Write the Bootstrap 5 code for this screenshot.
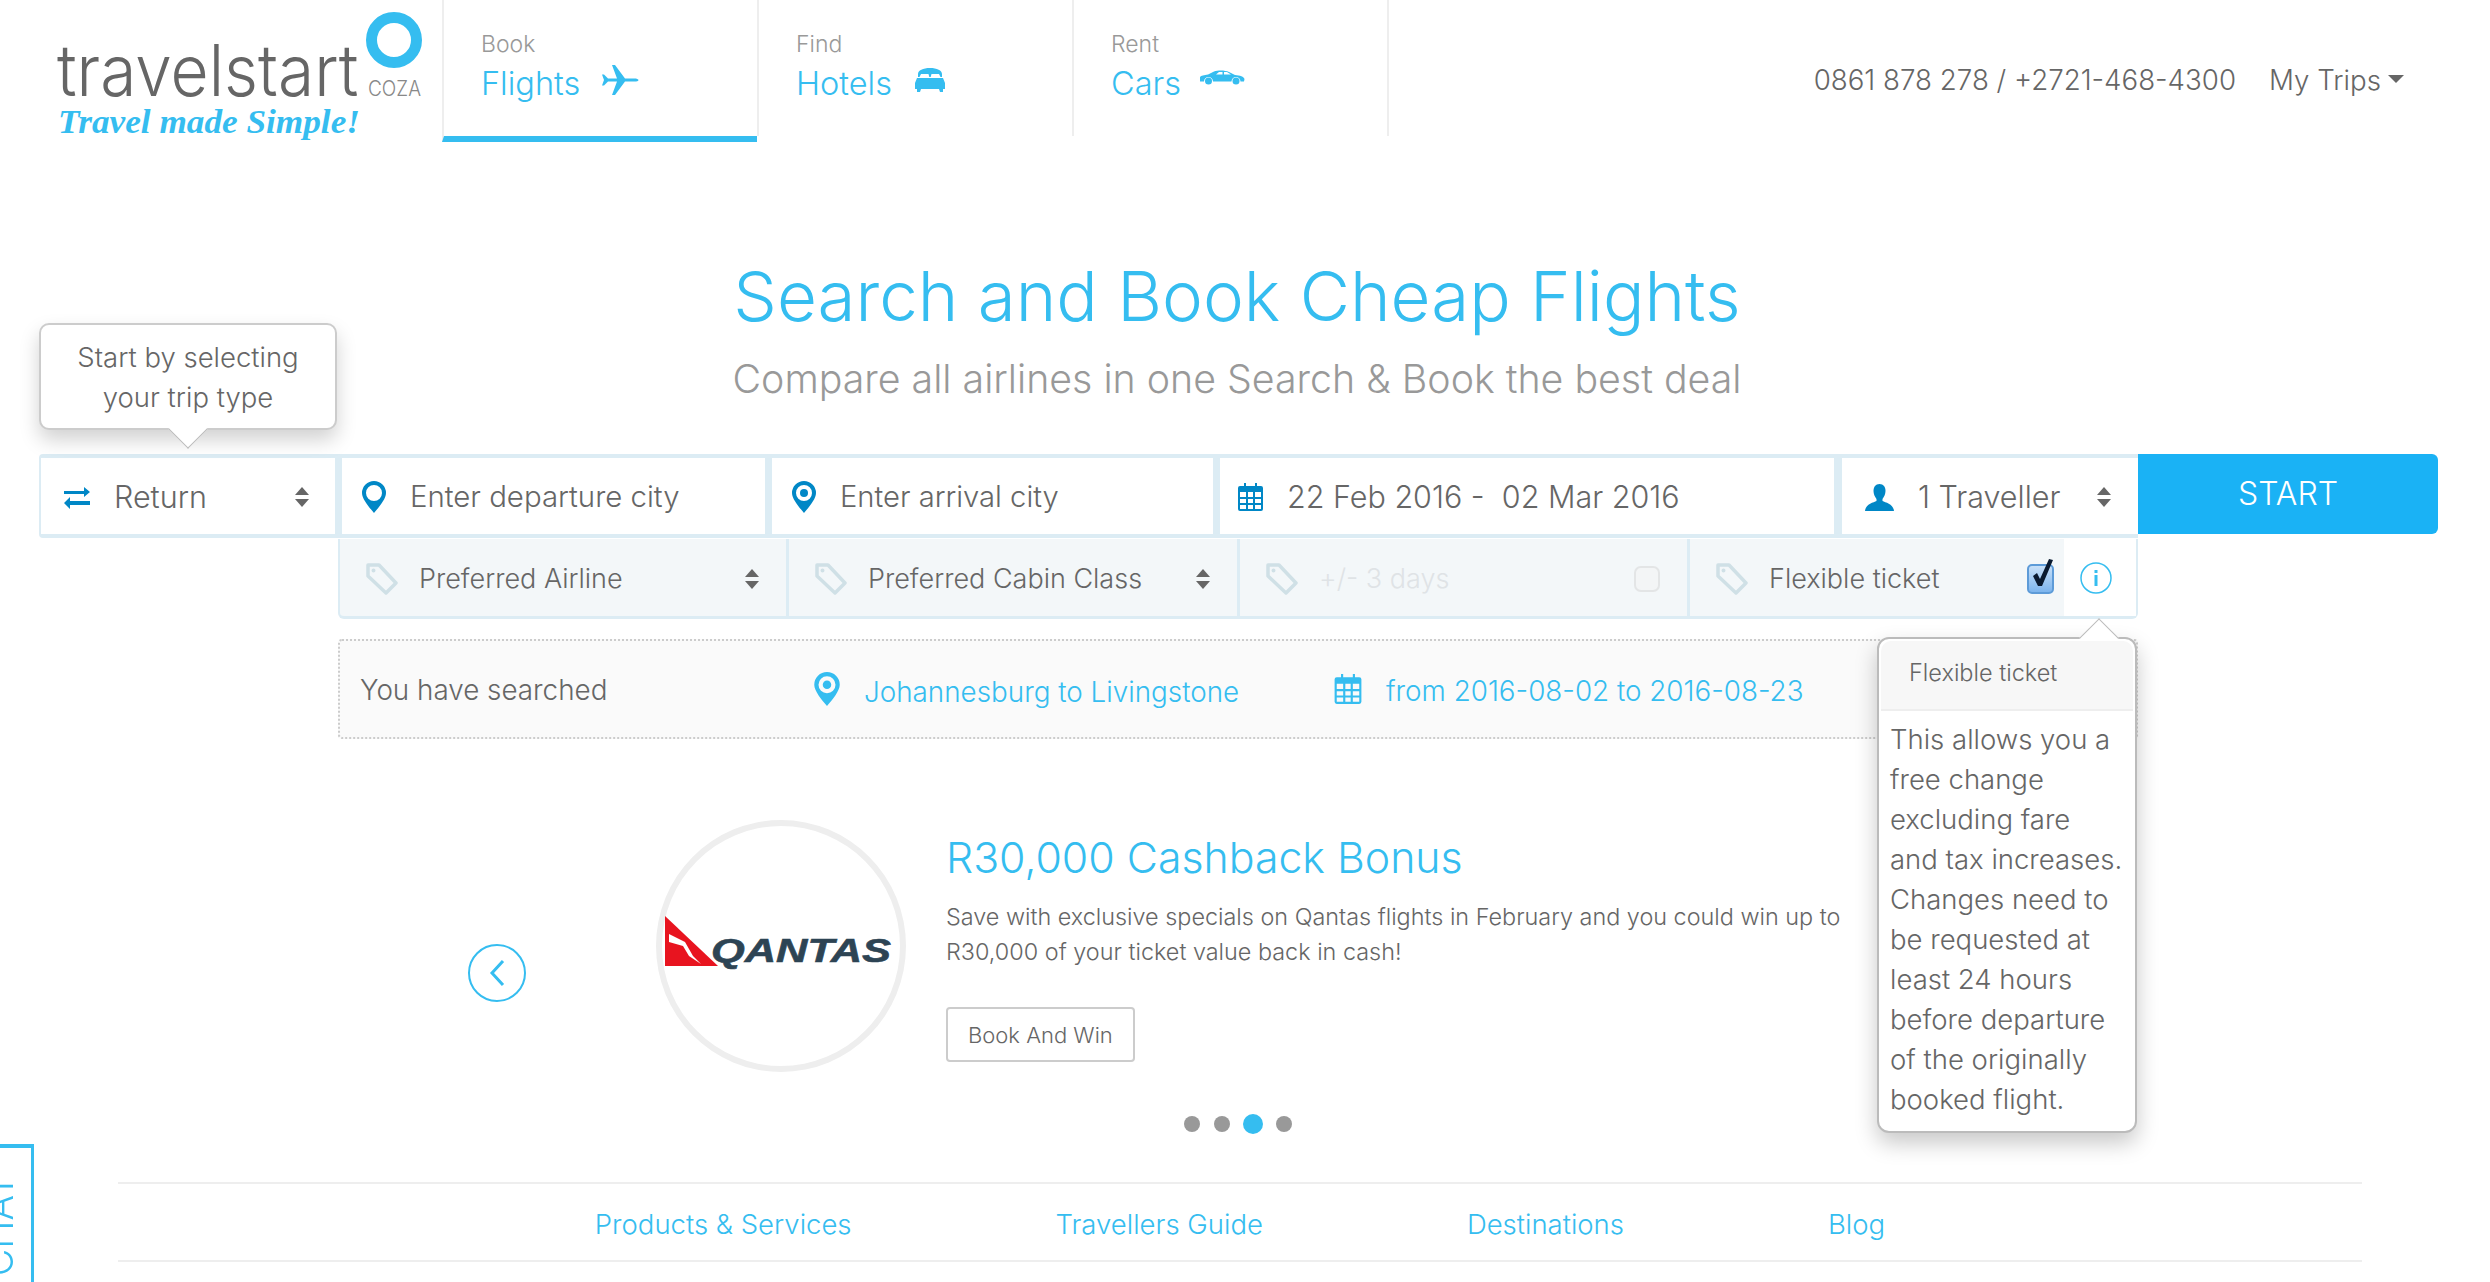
<!DOCTYPE html>
<html lang="en">
<head>
    <meta charset="UTF-8" />
    <meta name="viewport" content="width=device-width, initial-scale=1" />
    <title>Travelstart - Search and Book Cheap Flights</title>
    <link href="https://cdn.jsdelivr.net/npm/bootstrap@5.3.0/dist/css/bootstrap.min.css" rel="stylesheet" />
    <style>
        body {
            font-family: Inter, "Liberation Sans", sans-serif;
            font-weight: 300;
            font-size: 27.5px;
            line-height: 40px;
            color: #666;
            background: #fff;
            height: 1282px;
            overflow: hidden;
        }
        a { text-decoration: none; color: inherit; }

        /* top bar */
        .topbar { height: 142px; }
        .logo-box { width: 442px; flex: none; }
        .logo-word { font-family: Inter, sans-serif; font-weight: 300; font-size: 72px; fill: #666; }
        .logo-coza { font-family: Inter, sans-serif; font-weight: 300; font-size: 21px; fill: #888; }
        .logo-tag { font-family: "Liberation Serif", serif; font-style: italic; font-weight: 700; font-size: 33px; fill: #35bdf0; }
        .tab-item {
            width: 315px;
            height: 136px;
            padding: 26px 0 0 37px;
            border-left: 2px solid #eee;
            flex: none;
        }
        .tab-item.active { border-bottom: 6px solid #35bdf0; height: 142px; }
        .tab-end { border-left: 2px solid #eee; height: 136px; }
        .tab-over { font-size: 23px; line-height: 36px; color: #999; display: block; }
        .tab-name { font-size: 32.5px; line-height: 44px; color: #35bdf0; }
        .ico-plane { margin-left: 13px; vertical-align: 0; }
        .ico-bed { margin-left: 15px; vertical-align: 3px; }
        .ico-car { margin-left: 10px; vertical-align: 10px; }
        .top-right { margin-left: auto; padding: 58px 86px 0 0; line-height: 44px; font-size: 27.7px; }
        .top-right a { margin-left: 33px; }

        /* hero */
        .hero-wrap { padding-right: 16px; }
        .hero-title { font-size: 69px; line-height: 80px; color: #35bdf0; font-weight: 300; margin: 114px 0 0; }
        .hero-sub { font-size: 39.3px; line-height: 50px; color: #999; margin: 18px 0 0; }

        /* search */
        .search-wrap { position: relative; margin: 50px 52px 0 39px; }
        .field-row { height: 84px; }
        .field-main {
            height: 84px;
            background: #fff;
            border-top: 4px solid #dcecf4;
            border-bottom: 4px solid #dcecf4;
            border-right: 7px solid #dcecf4;
            flex: none;
            padding-top: 2px;
            font-size: 30.5px;
        }
        .f-return { width: 303px; border-left: 2px solid #dcecf4; border-radius: 4px 0 0 4px; padding: 2px 26px 0 23px; }
        .f-depart { width: 430px; padding-left: 20px; font-size: 29.4px; }
        .f-arrive { width: 448px; padding-left: 20px; font-size: 29.2px; }
        .f-date { width: 622px; padding-left: 18px; border-right-width: 8px; }
        .f-travel { width: 296px; border-right: 0; padding: 2px 27px 0 23px; }
        .start-btn {
            width: 300px;
            height: 80px;
            background: #1ab2f5;
            border: 0;
            border-radius: 0 6px 6px 0;
            color: #fff;
            font-size: 32px;
            font-weight: 300;
        }
        .extra-row {
            width: 1800px;
            height: 80px;
            margin: 1px 0 0 299px;
            background: #f3f7f9;
            border: 2px solid #dcecf4;
            border-width: 0 2px 3px 2px;
            border-radius: 0 0 6px 6px;
            font-size: 27px;
        }
        .extra-cell { height: 77px; padding: 2px 27px 0 26px; border-right: 3px solid #dcecf4; flex: none; }
        .tag-label { margin-left: 21px; }
        .c-airline { width: 449px; }
        .c-cabin { width: 451px; }
        .c-days { width: 450px; }
        .c-flex { width: 374px; border-right: 0; padding-right: 10px; }
        .c-info { width: 72px; background: #fff; padding: 0 0 0 16px; border-right: 0; }
        .muted-label { color: #dfe3e6; }
        .tick-box { width: 26px; height: 26px; margin: 0; border: 2px solid #d5d5d5; border-radius: 5px; background: #f4f4f4; }
        .tick-on { position: relative; width: 27px; height: 30px; border-radius: 5px; border: 2px solid #5d9bd8;
            background: linear-gradient(#c8e0f8, #7db5ee); display: block; }
        .tick-on svg { position: absolute; left: 1px; top: -8px; }
        .history-row {
            width: 1800px;
            height: 100px;
            margin: 20px 0 0 299px;
            background: #fafafa;
            border: 2px dotted #ccc;
            border-radius: 4px;
            padding-left: 20px;
            color: #35bdf0;
            font-size: 27.8px;
        }
        .history-lead { width: 454px; color: #666; flex: none; padding-top: 2px; }
        .history-place { width: 520px; flex: none; }
        .history-place a { padding-top: 6px; }

        /* tooltip + popover sit over the form */
        .hint-bubble {
            position: absolute;
            left: 0;
            top: -131px;
            width: 298px;
            height: 107px;
            padding: 12px 0;
            text-align: center;
            background: #fff;
            border: 2px solid #ccc;
            border-radius: 10px;
            box-shadow: 0 10px 20px rgba(0,0,0,.18);
        }
        .hint-bubble::after, .info-pop::before {
            content: "";
            position: absolute;
            width: 28px;
            height: 28px;
            background: #fff;
            border: 1px solid #bbb;
            border-width: 0 1px 1px 0;
            transform: rotate(45deg);
        }
        .hint-bubble::after { left: 133px; bottom: -15px; }
        .info-pop {
            position: absolute;
            left: 1838px;
            top: 183px;
            width: 260px;
            height: 496px;
            background: #fff;
            border: 2px solid #bbb;
            border-radius: 12px;
            box-shadow: 0 10px 22px rgba(0,0,0,.22);
        }
        .info-pop::before { left: 206px; top: -15px; transform: rotate(225deg); }
        .pop-head {
            height: 70px;
            margin: 2px 2px 0;
            padding-left: 28px;
            font-size: 23.5px;
            line-height: 64px;
            background: #f7f7f7;
            border-bottom: 2px solid #eee;
            border-radius: 10px 10px 0 0;
            position: relative;
        }
        .pop-text { padding: 8px 0 0 11px; white-space: pre-line; }

        /* promo */
        .promo { margin: 81px 0 0 468px; height: 252px; }
        .arrow-btn { width: 58px; height: 58px; border: 2px solid #35bdf0; border-radius: 50%; flex: none; margin-top: 124px; }
        .logo-round {
            width: 250px;
            height: 252px;
            margin-left: 130px;
            border: 6px solid #eee;
            border-radius: 50%;
            flex: none;
            padding-top: 90px;
            padding-left: 3px;
        }
        .qantas-word { font-family: "Liberation Sans", sans-serif; font-weight: 700; font-style: italic; font-size: 34px; fill: #2d4454; stroke: #2d4454; stroke-width: .6px; }
        .promo-body { margin-left: 40px; }
        .promo-title { font-size: 42.8px; line-height: 60px; color: #35bdf0; font-weight: 300; margin: 8px 0 0; }
        .promo-text { font-size: 23.4px; line-height: 35px; margin: 11px 0 0; width: 925px; }
        .promo-btn { margin-top: 38px; height: 55px; padding: 0 20px; font-size: 22px; font-weight: 300; color: #666; border: 2px solid #ccc; border-radius: 4px; background: #fff; }
        .dot-row { margin: 42px 0 0 1184px; height: 20px; gap: 14px; }
        .pager-dot { width: 16px; height: 16px; border-radius: 50%; background: #999; }
        .pager-dot.on { width: 20px; height: 20px; background: #35bdf0; margin: 0 -1px 0 -1px; }

        /* footer links */
        .foot-links {
            margin: 48px 128px 0 118px;
            height: 80px;
            gap: 204px;
            padding-top: 3px;
            border-top: 2px solid #eee;
            border-bottom: 2px solid #eee;
            color: #35bdf0;
        }

        /* chat tab */
        .chat-tab {
            width: 34px;
            height: 138px;
            left: 0;
            bottom: 0;
            border: 3px solid #35bdf0;
            border-left: 0;
            border-bottom: 0;
            border-top-width: 4px;
            overflow: hidden;
        }
        .chat-label {
            position: absolute;
            right: 20px;
            top: 26px;
            writing-mode: vertical-rl;
            transform: rotate(180deg);
            color: #35bdf0;
            font-size: 38px;
            line-height: 24px;
            white-space: nowrap;
        }
    </style>
</head>
<body>

<!-- Top bar -->
<header class="topbar d-flex">
    <a class="logo-box" href="#">
        <svg width="442" height="142" viewBox="0 0 442 142">
            <text class="logo-word" transform="translate(57 96) scale(.9 1)" textLength="335" lengthAdjust="spacingAndGlyphs">travelstart</text>
            <circle cx="394" cy="40" r="22.5" fill="none" stroke="#35bdf0" stroke-width="11" />
            <text class="logo-coza" x="368" y="96" textLength="53" lengthAdjust="spacingAndGlyphs">COZA</text>
            <text class="logo-tag" x="58" y="133" textLength="302" lengthAdjust="spacingAndGlyphs">Travel made Simple!</text>
        </svg>
    </a>
    <nav class="d-flex">
        <a class="tab-item active" href="#">
            <span class="tab-over">Book</span>
            <span class="tab-name">Flights</span>
            <svg class="ico-plane" width="38" height="30" viewBox="0 0 38 30" fill="#35bdf0"><path d="M37.5 15c0-1-2-1.6-4-1.6H24L14 0h-3l5 13.4H7L3 9.5H1l2 5.5-2 5.5h2l4-3.9h9L11 30h3l10-13.4h9.500c2 0 4-.6 4-1.600z" /></svg>
        </a>
        <a class="tab-item" href="#">
            <span class="tab-over">Find</span>
            <span class="tab-name">Hotels</span>
            <svg class="ico-bed" width="30" height="24" viewBox="0 0 30 24" fill="#35bdf0"><path d="M3 9V6C3 2.500 8 0 15 0s12 2.500 12 6v3h-1.500L24 6h-7.500l-.8 3h-1.400l-.8-3H6L4.500 9z" /><path d="M2 10h26l2 5v6h-2v3h-3l-1-3H6l-1 3H2v-3H0v-6z" /></svg>
        </a>
        <a class="tab-item" href="#">
            <span class="tab-over">Rent</span>
            <span class="tab-name">Cars</span>
            <svg class="ico-car" width="46" height="15" viewBox="0 0 46 15" fill="#35bdf0"><path d="M1 7c1-1.500 4-2 8-2.500L15 1.500C19 0 26 0 30 2l6 3c5 .5 9 1.500 9.500 4l-.5 2.500h-3.500a4.500 4.500 0 0 0-9 0H14a4.500 4.500 0 0 0-9 0H1z" /><circle cx="9.500" cy="11" r="3.500" /><circle cx="37" cy="11" r="3.500" /><path fill="#fff" d="M17 4.500l3-2.500h3.500v2.500zM25 2h3l4 2.500h-7z" /></svg>
        </a>
        <div class="tab-end"></div>
    </nav>
    <div class="top-right d-flex">
        <span>0861 878 278 / +2721-468-4300</span>
        <a class="dropdown-toggle" href="#">My Trips</a>
    </div>
</header>

<!-- Heading -->
<section class="hero-wrap text-center">
    <h1 class="hero-title">Search and Book Cheap Flights</h1>
    <p class="hero-sub">Compare all airlines in one Search &amp; Book the best deal</p>
</section>

<!-- Search form -->
<section class="search-wrap">
    <div class="hint-bubble">Start by selecting<br />your trip type</div>

    <div class="field-row d-flex">
        <div class="field-main f-return d-flex align-items-center">
            <svg width="26" height="23" viewBox="0 0 26 23" fill="#0087c6"><path d="M0 5h20V1l6 5-6 5V8H0zM26 15H6v-4l-6 6 6 6v-4h20z" /></svg>
            <span class="ms-4 flex-grow-1 return-label">Return</span>
            <svg width="14" height="20" viewBox="0 0 14 20" fill="#666"><path d="M7 0l7 8H0zM7 20L0 12h14z" /></svg>
        </div>
        <div class="field-main f-depart d-flex align-items-center">
            <svg width="24" height="32" viewBox="0 0 24 32"><path fill="#0087c6" fill-rule="evenodd" d="M12 0a12 12 0 0 1 12 12c0 6-7 14-12 20C7 26 0 18 0 12A12 12 0 0 1 12 0zm0 4a8 8 0 1 0 0 16 8 8 0 0 0 0-16z" /></svg>
            <span class="ms-4">Enter departure city</span>
        </div>
        <div class="field-main f-arrive d-flex align-items-center">
            <svg width="24" height="32" viewBox="0 0 24 32"><path fill="#0087c6" fill-rule="evenodd" d="M12 0a12 12 0 0 1 12 12c0 6-7 14-12 20C7 26 0 18 0 12A12 12 0 0 1 12 0zm0 4a8 8 0 1 0 0 16 8 8 0 0 0 0-16z" /><circle cx="12" cy="12" r="4" fill="#0087c6" /></svg>
            <span class="ms-4">Enter arrival city</span>
        </div>
        <div class="field-main f-date d-flex align-items-center">
            <svg width="25" height="28" viewBox="0 0 25 28" fill="#0087c6"><path fill-rule="evenodd" d="M2 3h4V0h2v3h9V0h2v3h4a2 2 0 0 1 2 2v21a2 2 0 0 1-2 2H2a2 2 0 0 1-2-2V5a2 2 0 0 1 2-2zm0 6v5h6V9zm8 0v5h5V9zm7 0v5h6V9zM2 16v4h6v-4zm8 0v4h5v-4zm7 0v4h6v-4zM2 22v4h6v-4zm8 0v4h5v-4zm7 0v4h6v-4z" /></svg>
            <span class="ms-4">22 Feb 2016 -&nbsp; 02 Mar 2016</span>
        </div>
        <div class="field-main f-travel d-flex align-items-center">
            <svg width="29" height="27" viewBox="0 0 29 27" fill="#0087c6"><path d="M14.500 0c4 0 6 3 6 7 0 3-1.500 6-3 8v2c3 1.500 11 3 11.500 10H0c.5-7 8.500-8.500 11.500-10v-2c-1.500-2-3-5-3-8 0-4 2-7 6-7z" /></svg>
            <span class="ms-4 flex-grow-1">1 Traveller</span>
            <svg width="14" height="20" viewBox="0 0 14 20" fill="#666"><path d="M7 0l7 8H0zM7 20L0 12h14z" /></svg>
        </div>
        <button class="start-btn" type="button">START</button>
    </div>

    <div class="extra-row d-flex">
        <div class="extra-cell c-airline d-flex align-items-center">
            <svg width="32" height="32" viewBox="0 0 32 32" fill="none" stroke="#cfe0e6" stroke-width="3.500" stroke-linejoin="round"><path d="M2 2h11l17 18-10 10L2 13z" /><circle cx="7.500" cy="7.500" r="1" fill="#cfe0e6" stroke-width="2" /></svg>
            <span class="flex-grow-1 tag-label">Preferred Airline</span>
            <svg width="14" height="20" viewBox="0 0 14 20" fill="#666"><path d="M7 0l7 8H0zM7 20L0 12h14z" /></svg>
        </div>
        <div class="extra-cell c-cabin d-flex align-items-center">
            <svg width="32" height="32" viewBox="0 0 32 32" fill="none" stroke="#cfe0e6" stroke-width="3.500" stroke-linejoin="round"><path d="M2 2h11l17 18-10 10L2 13z" /><circle cx="7.500" cy="7.500" r="1" fill="#cfe0e6" stroke-width="2" /></svg>
            <span class="flex-grow-1 tag-label">Preferred Cabin Class</span>
            <svg width="14" height="20" viewBox="0 0 14 20" fill="#666"><path d="M7 0l7 8H0zM7 20L0 12h14z" /></svg>
        </div>
        <div class="extra-cell c-days d-flex align-items-center">
            <svg width="32" height="32" viewBox="0 0 32 32" fill="none" stroke="#cfe0e6" stroke-width="3.500" stroke-linejoin="round"><path d="M2 2h11l17 18-10 10L2 13z" /><circle cx="7.500" cy="7.500" r="1" fill="#cfe0e6" stroke-width="2" /></svg>
            <span class="flex-grow-1 tag-label muted-label">+/- 3 days</span>
            <input class="tick-box form-check-input" type="checkbox" disabled />
        </div>
        <div class="extra-cell c-flex d-flex align-items-center">
            <svg width="32" height="32" viewBox="0 0 32 32" fill="none" stroke="#cfe0e6" stroke-width="3.500" stroke-linejoin="round"><path d="M2 2h11l17 18-10 10L2 13z" /><circle cx="7.500" cy="7.500" r="1" fill="#cfe0e6" stroke-width="2" /></svg>
            <span class="flex-grow-1 tag-label">Flexible ticket</span>
            <span class="tick-on"><svg width="24" height="32" viewBox="0 0 24 32"><path d="M3 18l4-3 3 6L19 1l4 1-11 26H8z" fill="#0a1a30" /></svg></span>
        </div>
        <div class="extra-cell c-info d-flex align-items-center">
            <svg width="32" height="32" viewBox="0 0 32 32"><circle cx="16" cy="16" r="15" fill="none" stroke="#35bdf0" stroke-width="1.500" /><rect x="14.500" y="13" width="3" height="11" fill="#35bdf0" /><rect x="14.500" y="8" width="3" height="3" fill="#35bdf0" /></svg>
        </div>
    </div>

    <div class="history-row d-flex align-items-center">
        <span class="history-lead">You have searched</span>
        <span class="history-place d-flex align-items-center">
            <svg width="26" height="34" viewBox="0 0 24 32"><path fill="#35bdf0" fill-rule="evenodd" d="M12 0a12 12 0 0 1 12 12c0 6-7 14-12 20C7 26 0 18 0 12A12 12 0 0 1 12 0zm0 4a8 8 0 1 0 0 16 8 8 0 0 0 0-16z" /><circle cx="12" cy="12" r="4" fill="#35bdf0" /></svg>
            <a class="ms-4" href="#">Johannesburg to Livingstone</a>
        </span>
        <span class="d-flex align-items-center">
            <svg width="28" height="30" viewBox="0 0 25 28" fill="#35bdf0"><path fill-rule="evenodd" d="M2 3h4V0h2v3h9V0h2v3h4a2 2 0 0 1 2 2v21a2 2 0 0 1-2 2H2a2 2 0 0 1-2-2V5a2 2 0 0 1 2-2zm0 6v5h6V9zm8 0v5h5V9zm7 0v5h6V9zM2 16v4h6v-4zm8 0v4h5v-4zm7 0v4h6v-4zM2 22v4h6v-4zm8 0v4h5v-4zm7 0v4h6v-4z" /></svg>
            <a class="ms-4 pt-1" href="#">from 2016-08-02 to 2016-08-23</a>
        </span>
    </div>

    <div class="info-pop">
        <div class="pop-head">Flexible ticket</div>
        <div class="pop-text">This allows you a
free change
excluding fare
and tax increases.
Changes need to
be requested at
least 24 hours
before departure
of the originally
booked flight.</div>
    </div>
</section>

<!-- Promo slider -->
<section class="promo d-flex">
    <a class="arrow-btn d-flex align-items-center justify-content-center" href="#">
        <svg width="16" height="28" viewBox="0 0 16 28" fill="none" stroke="#35bdf0" stroke-width="3"><path d="M14 2L3 14l11 12" /></svg>
    </a>
    <div class="logo-round">
        <svg width="232" height="54" viewBox="0 0 232 54">
            <path d="M0 0l53 50H0z" fill="#e8141f" />
            <path d="M4 18l16 8 8 14 8 8-12-8-6-10-14-4z" fill="#fff" />
            <text class="qantas-word" x="46" y="46" textLength="180" lengthAdjust="spacingAndGlyphs">QANTAS</text>
        </svg>
    </div>
    <div class="promo-body">
        <h2 class="promo-title">R30,000 Cashback Bonus</h2>
        <p class="promo-text">Save with exclusive specials on Qantas flights in February and you could win up to R30,000 of your ticket value back in cash!</p>
        <button class="promo-btn" type="button">Book And Win</button>
    </div>
</section>

<div class="dot-row d-flex align-items-center">
    <span class="pager-dot"></span>
    <span class="pager-dot"></span>
    <span class="pager-dot on"></span>
    <span class="pager-dot"></span>
</div>

<!-- Footer links -->
<nav class="foot-links d-flex align-items-center justify-content-center">
    <a href="#">Products &amp; Services</a>
    <a href="#">Travellers Guide</a>
    <a href="#">Destinations</a>
    <a href="#">Blog</a>
</nav>

<!-- Chat tab -->
<div class="chat-tab position-fixed">
    <span class="chat-label">LIVE CHAT</span>
</div>

<script src="https://cdn.jsdelivr.net/npm/bootstrap@5.3.0/dist/js/bootstrap.bundle.min.js"></script>
</body>
</html>
